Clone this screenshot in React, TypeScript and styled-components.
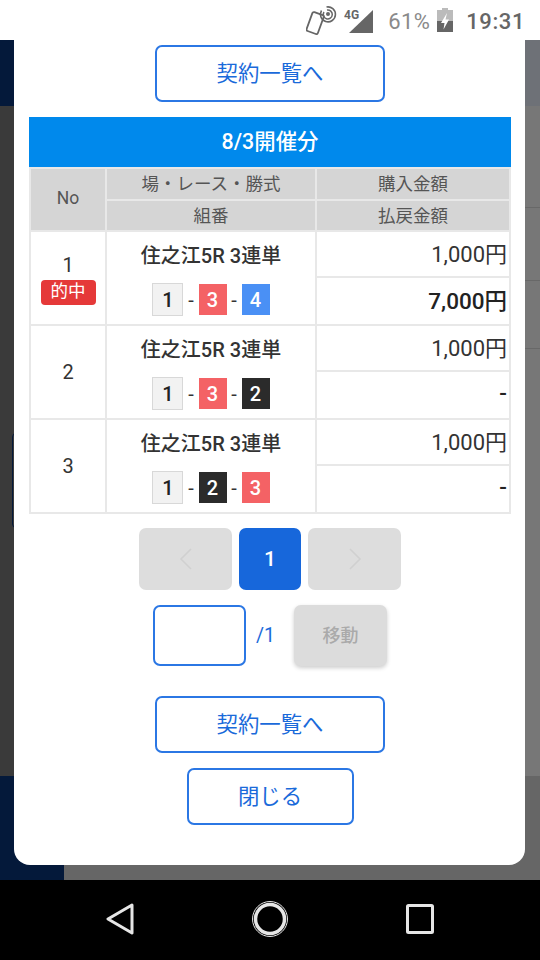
import styled, { createGlobalStyle } from "styled-components";

const GlobalStyle = createGlobalStyle`
  html, body {
    margin: 0;
    padding: 0;
    background: #000;
  }
  * {
    box-sizing: border-box;
  }
`;

const FONT = `Roboto, "Noto Sans CJK JP", sans-serif`;
const BLUE = "#1a6ada";
const OUTLINE = "#2b77e4";

interface Bet {
  no: number;
  hit?: boolean;
  race: string;
  combo: number[];
  stake: string;
  payout: string;
}

const bets: Bet[] = [
  { no: 1, hit: true, race: "住之江5R 3連単", combo: [1, 3, 4], stake: "1,000円", payout: "7,000円" },
  { no: 2, race: "住之江5R 3連単", combo: [1, 3, 2], stake: "1,000円", payout: "-" },
  { no: 3, race: "住之江5R 3連単", combo: [1, 2, 3], stake: "1,000円", payout: "-" },
];

const Phone = styled.div`
  width: 540px;
  height: 960px;
  display: flex;
  flex-direction: column;
  overflow: hidden;
  font-family: ${FONT};
`;

const StatusBar = styled.div`
  height: 40px;
  background: #fff;
  display: flex;
  align-items: center;
  justify-content: flex-end;
  padding: 0 15px 0 0;
`;

const Percent = styled.span`
  font-size: 22px;
  letter-spacing: 0.4px;
  color: #8a8a8a;
  margin: 2px 7px 0 13px;
`;

const Clock = styled.span`
  font-size: 22px;
  font-weight: 500;
  letter-spacing: 0.6px;
  color: #666;
  margin: 2px 0 0 13px;
`;

const Backdrop = styled.div`
  position: relative;
  height: 840px;
  background: linear-gradient(
    to right,
    #3a3a3a 0,
    #3a3a3a 270px,
    #777 270px,
    #777 100%
  );
`;

const TopBand = styled.div`
  height: 66px;
  background: linear-gradient(to right, #04193a 0, #04193a 270px, #6e7177 270px);
`;

const BottomBand = styled.div`
  position: absolute;
  left: 0;
  right: 0;
  bottom: 0;
  height: 104px;
  background: linear-gradient(to right, #04193a 0, #04193a 64px, #666 64px);
`;

const BehindCard = styled.div`
  position: absolute;
  left: 12px;
  top: 393px;
  width: 8px;
  height: 95px;
  border: 1px solid #04193a;
  border-radius: 4px;
`;

const RowLine = styled.div<{ $top: number }>`
  position: absolute;
  right: 0;
  top: ${(p) => p.$top}px;
  width: 20px;
  height: 1px;
  background: #686868;
`;

const Modal = styled.div`
  position: absolute;
  top: 0;
  left: 14px;
  width: 511px;
  height: 825px;
  background: #fff;
  border-radius: 0 0 16px 16px;
  padding: 5px 14px 0 15px;
  display: flex;
  flex-direction: column;
  align-items: center;
`;

const OutlineButton = styled.button<{ $width: number }>`
  width: ${(p) => p.$width}px;
  height: 57px;
  flex: none;
  border: 2px solid ${OUTLINE};
  border-radius: 7px;
  background: #fff;
  color: ${BLUE};
  font-family: ${FONT};
  font-size: 21.4px;
  padding: 0 0 4px;
`;

const SectionTitle = styled.div`
  align-self: stretch;
  height: 50px;
  margin-top: 15px;
  background: #0089ec;
  color: #fff;
  font-size: 21.4px;
  font-weight: 500;
  line-height: 49px;
  text-align: center;
`;

const BetTable = styled.table`
  width: 482px;
  flex: none;
  table-layout: fixed;
  border-collapse: collapse;
  border: 2px solid #e8e8e8;
`;

const HeadCell = styled.th<{ $first?: boolean }>`
  height: ${(p) => (p.$first ? 32 : 31)}px;
  padding: 0 0 3px;
  background: #d5d5d5;
  border: 2px solid #e8e8e8;
  color: #555;
  font-size: 17.5px;
  font-weight: 400;
  text-align: center;
`;

const Cell = styled.td`
  padding: 0;
  border: 2px solid #e8e8e8;
  color: #222;
  text-align: center;
`;

const NoCell = styled(Cell)<{ $hit?: boolean }>`
  padding-top: ${(p) => (p.$hit ? 2 : 0)}px;
  font-size: 20px;
  color: #333;
`;

const AmountCell = styled(Cell)<{ $bold?: boolean }>`
  height: ${(p) => (p.$bold ? "48px" : "46px")};
  padding: 0 2px ${(p) => (p.$bold ? 4 : 5)}px 0;
  text-align: right;
  font-size: ${(p) => (p.$bold ? 22.5 : 22)}px;
  font-weight: ${(p) => (p.$bold ? 500 : 400)};
  color: ${(p) => (p.$bold ? "#222" : "#333")};
`;

const HitBadge = styled.div`
  width: 55px;
  height: 25px;
  margin: 3px auto 0;
  border-radius: 4px;
  background: #e53939;
  color: #fff;
  font-size: 17.5px;
  line-height: 23px;
`;

const RaceName = styled.div`
  font-size: 20px;
  font-weight: 500;
  color: #333;
  margin-bottom: 14px;
`;

const Combo = styled.div`
  display: flex;
  justify-content: center;
  align-items: center;
  gap: 4.75px;
  color: #333;
  font-size: 20px;
`;

const boatColors: Record<number, { bg: string; fg: string; border: string }> = {
  1: { bg: "#f2f2f2", fg: "#222", border: "#d8d8d8" },
  2: { bg: "#2b2b2b", fg: "#fff", border: "#2b2b2b" },
  3: { bg: "#f46265", fg: "#fff", border: "#f46265" },
  4: { bg: "#4a90f5", fg: "#fff", border: "#4a90f5" },
};

const Boat = styled.span<{ $n: number }>`
  width: ${(p) => (p.$n === 1 ? 31 : 28)}px;
  height: ${(p) => (p.$n === 1 ? 33 : 31)}px;
  display: flex;
  align-items: center;
  justify-content: center;
  background: ${(p) => boatColors[p.$n].bg};
  color: ${(p) => boatColors[p.$n].fg};
  border: 1.5px solid ${(p) => boatColors[p.$n].border};
  font-size: 20px;
  font-weight: 500;
`;

const Pager = styled.div`
  display: flex;
  gap: 7px;
  margin-top: 14px;
`;

const PageArrow = styled.div`
  width: 93px;
  height: 62px;
  border-radius: 7px;
  background: #ddd;
  display: flex;
  align-items: center;
  justify-content: center;
`;

const PageCurrent = styled.div`
  width: 62px;
  height: 62px;
  border-radius: 7px;
  background: #1767db;
  color: #fff;
  font-size: 21px;
  font-weight: 500;
  display: flex;
  align-items: center;
  justify-content: center;
`;

const JumpRow = styled.div`
  width: 234px;
  display: flex;
  align-items: center;
  margin-top: 15px;
`;

const JumpInput = styled.input`
  width: 93px;
  height: 61px;
  border: 2px solid ${OUTLINE};
  border-radius: 7px;
  background: #fff;
  padding: 0;
`;

const PageTotal = styled.span`
  margin-left: 10px;
  color: ${BLUE};
  font-size: 19.5px;
  flex: 1;
`;

const MoveButton = styled.button`
  width: 93px;
  height: 61px;
  border: 0;
  border-radius: 7px;
  background: #dcdcdc;
  color: #aaa;
  font-family: ${FONT};
  font-size: 18px;
  font-weight: 500;
  padding: 0 0 4px;
  box-shadow: 0 2px 4px rgba(0, 0, 0, 0.2);
`;

const BottomActions = styled.div`
  display: flex;
  flex-direction: column;
  align-items: center;
  gap: 15px;
  margin-top: 30px;
`;

const NavBar = styled.div`
  height: 80px;
  flex: none;
  background: #000;
  display: flex;
  align-items: center;
  justify-content: center;
  gap: 117px;
  padding-bottom: 3px;
`;

const SignalIcon = () => (
  <svg width="31" height="26" viewBox="0 0 31 26">
    <text x="0" y="12" fontSize="12" fontWeight="700" fontFamily="Roboto, sans-serif" fill="#666">
      4G
    </text>
    <path d="M5 26 L29 3 V26 Z" fill="#666" />
  </svg>
);

const NfcIcon = () => (
  <svg width="32" height="30" viewBox="0 0 32 30" fill="none" stroke="#666" style={{ marginRight: 6 }}>
    <rect x="3.5" y="8" width="12" height="20" rx="1.6" strokeWidth="1.8" transform="rotate(20 9 17)" />
    <circle cx="22" cy="9" r="2" fill="#666" stroke="none" />
    <path d="M18.5 15.5 A7.5 7.5 0 1 0 15 10.5" strokeWidth="1.6" transform="rotate(90 22 9)" />
    <path d="M20 13 A4.5 4.5 0 1 0 18 10" strokeWidth="1.5" transform="rotate(90 22 9)" />
  </svg>
);

const BatteryIcon = () => (
  <svg width="16" height="24" viewBox="0 0 16 24">
    <path d="M5 0 H11 V2 H16 V13 H0 V2 H5 Z" fill="#bbb" />
    <path d="M0 13 H16 V24 H0 Z" fill="#666" />
    <path d="M10 5 L4 15 H7.5 L6.5 21.5 L12 11.5 H8.5 Z" fill="#fff" />
  </svg>
);

const Chevron = ({ left }: { left?: boolean }) => (
  <svg width="14" height="22" viewBox="0 0 14 22" fill="none" stroke="#d0d0d0" strokeWidth="1.6">
    <path d={left ? "M12 1 L2 11 L12 21" : "M2 1 L12 11 L2 21"} />
  </svg>
);

const BackIcon = () => (
  <svg width="28" height="32" viewBox="0 0 28 32" fill="none" stroke="#e6e6e6" strokeWidth="3" strokeLinejoin="round">
    <path d="M26 2 L2 16 L26 30 Z" />
  </svg>
);

const HomeIcon = () => (
  <svg width="38" height="38" viewBox="0 0 38 38" fill="none">
    <circle cx="19" cy="19" r="17.5" stroke="#e6e6e6" strokeWidth="1" />
    <circle cx="19" cy="19" r="14.5" stroke="#e6e6e6" strokeWidth="3.5" />
  </svg>
);

const RecentIcon = () => (
  <svg width="28" height="30" viewBox="0 0 28 30" fill="none" stroke="#e6e6e6" strokeWidth="3" strokeLinejoin="round">
    <rect x="1.5" y="1.5" width="25" height="27" rx="1" />
  </svg>
);

const App = () => {
  return (
    <>
      <GlobalStyle />
      <Phone>
        <StatusBar>
          <NfcIcon />
          <SignalIcon />
          <Percent>61%</Percent>
          <BatteryIcon />
          <Clock>19:31</Clock>
        </StatusBar>
        <Backdrop>
          <TopBand />
          <BottomBand />
          <BehindCard />
          <RowLine $top={167} />
          <RowLine $top={240} />
          <RowLine $top={308} />
          <Modal>
            <OutlineButton $width={230}>契約一覧へ</OutlineButton>
            <SectionTitle>8/3開催分</SectionTitle>
            <BetTable>
              <colgroup>
                <col style={{ width: 76 }} />
                <col style={{ width: 210 }} />
                <col />
              </colgroup>
              <thead>
                <tr>
                  <HeadCell $first rowSpan={2}>No</HeadCell>
                  <HeadCell $first>場・レース・勝式</HeadCell>
                  <HeadCell $first>購入金額</HeadCell>
                </tr>
                <tr>
                  <HeadCell>組番</HeadCell>
                  <HeadCell>払戻金額</HeadCell>
                </tr>
              </thead>
              <tbody>
                {bets.map((bet) => [
                  <tr key={`${bet.no}-a`}>
                    <NoCell rowSpan={2} $hit={bet.hit}>
                      {bet.no}
                      {bet.hit && <HitBadge>的中</HitBadge>}
                    </NoCell>
                    <Cell rowSpan={2}>
                      <RaceName>{bet.race}</RaceName>
                      <Combo>
                        <Boat $n={bet.combo[0]}>{bet.combo[0]}</Boat>-
                        <Boat $n={bet.combo[1]}>{bet.combo[1]}</Boat>-
                        <Boat $n={bet.combo[2]}>{bet.combo[2]}</Boat>
                      </Combo>
                    </Cell>
                    <AmountCell>{bet.stake}</AmountCell>
                  </tr>,
                  <tr key={`${bet.no}-b`}>
                    <AmountCell $bold>{bet.payout}</AmountCell>
                  </tr>,
                ])}
              </tbody>
            </BetTable>
            <Pager>
              <PageArrow>
                <Chevron left />
              </PageArrow>
              <PageCurrent>1</PageCurrent>
              <PageArrow>
                <Chevron />
              </PageArrow>
            </Pager>
            <JumpRow>
              <JumpInput />
              <PageTotal>/1</PageTotal>
              <MoveButton>移動</MoveButton>
            </JumpRow>
            <BottomActions>
              <OutlineButton $width={230}>契約一覧へ</OutlineButton>
              <OutlineButton $width={167}>閉じる</OutlineButton>
            </BottomActions>
          </Modal>
        </Backdrop>
        <NavBar>
          <BackIcon />
          <HomeIcon />
          <RecentIcon />
        </NavBar>
      </Phone>
    </>
  );
};

export default App;
